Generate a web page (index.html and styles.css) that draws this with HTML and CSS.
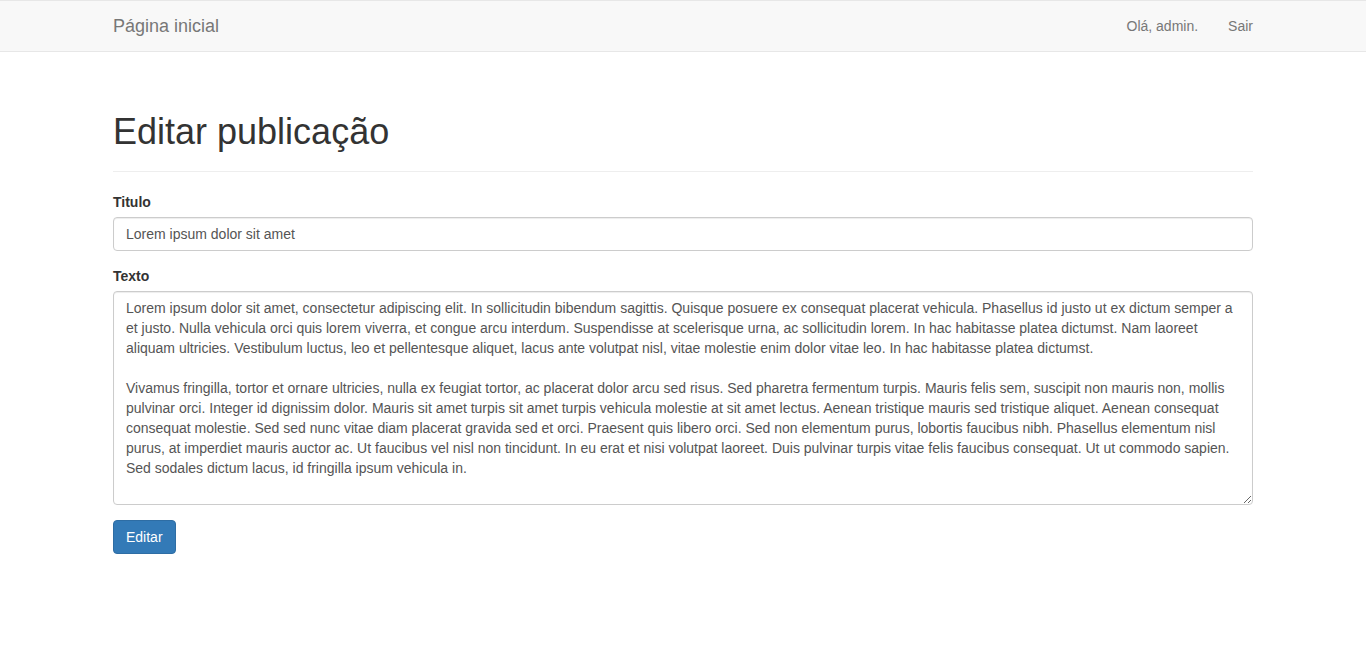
FILE: index.html
```html
<!DOCTYPE html>
<html lang="pt">
<head>
<meta charset="utf-8">
<title>Editar publicação</title>
<link rel="stylesheet" href="styles.css">
</head>
<body>
<nav class="navbar">
  <div class="container navbar-inner">
    <a class="navbar-brand" href="#">Página inicial</a>
    <ul class="navbar-right">
      <li><a href="#">Olá, admin.</a></li>
      <li><a href="#">Sair</a></li>
    </ul>
  </div>
</nav>
<main class="container main">
  <div class="page-header">
    <h1>Editar publicação</h1>
  </div>
  <form>
    <div class="form-group">
      <label for="titulo">Titulo</label>
      <input id="titulo" class="form-control" type="text" value="Lorem ipsum dolor sit amet">
    </div>
    <div class="form-group">
      <label for="texto">Texto</label>
      <textarea id="texto" class="form-control" rows="10">Lorem ipsum dolor sit amet, consectetur adipiscing elit. In sollicitudin bibendum sagittis. Quisque posuere ex consequat placerat vehicula. Phasellus id justo ut ex dictum semper a et justo. Nulla vehicula orci quis lorem viverra, et congue arcu interdum. Suspendisse at scelerisque urna, ac sollicitudin lorem. In hac habitasse platea dictumst. Nam laoreet aliquam ultricies. Vestibulum luctus, leo et pellentesque aliquet, lacus ante volutpat nisl, vitae molestie enim dolor vitae leo. In hac habitasse platea dictumst.

Vivamus fringilla, tortor et ornare ultricies, nulla ex feugiat tortor, ac placerat dolor arcu sed risus. Sed pharetra fermentum turpis. Mauris felis sem, suscipit non mauris non, mollis pulvinar orci. Integer id dignissim dolor. Mauris sit amet turpis sit amet turpis vehicula molestie at sit amet lectus. Aenean tristique mauris sed tristique aliquet. Aenean consequat consequat molestie. Sed sed nunc vitae diam placerat gravida sed et orci. Praesent quis libero orci. Sed non elementum purus, lobortis faucibus nibh. Phasellus elementum nisl purus, at imperdiet mauris auctor ac. Ut faucibus vel nisl non tincidunt. In eu erat et nisi volutpat laoreet. Duis pulvinar turpis vitae felis faucibus consequat. Ut ut commodo sapien. Sed sodales dictum lacus, id fringilla ipsum vehicula in.</textarea>
    </div>
    <button type="submit" class="btn-primary">Editar</button>
  </form>
</main>
</body>
</html>
```

FILE: styles.css
```css
* { box-sizing: border-box; }
html, body {
  margin: 0;
  padding: 0;
}
body {
  font-family: "Liberation Sans", Arial, sans-serif;
  font-size: 14px;
  line-height: 1.42857143;
  color: #333;
  background: #fff;
}
.container {
  width: 1170px;
  margin: 0 auto;
  padding: 0 15px;
}
.main {
  display: flow-root;
}
.navbar {
  background: #f8f8f8;
  border: 1px solid #e7e7e7;
  border-left: 0;
  border-right: 0;
  min-height: 50px;
  margin-bottom: 20px;
}
.navbar-inner {
  display: flex;
  justify-content: space-between;
  align-items: stretch;
  height: 50px;
}
.navbar-brand {
  font-size: 18px;
  line-height: 20px;
  padding: 15px 0;
  color: #777;
  text-decoration: none;
}
.navbar-right {
  list-style: none;
  margin: 0 -15px 0 0;
  padding: 0;
  display: flex;
}
.navbar-right a {
  display: block;
  padding: 15px;
  line-height: 20px;
  color: #777;
  text-decoration: none;
}
.page-header {
  margin: 40px 0 20px;
  padding-bottom: 9px;
  border-bottom: 1px solid #eee;
}
.page-header h1 {
  margin: 0 0 10px;
  font-size: 36px;
  font-weight: 500;
  line-height: 1.1;
}
.form-group {
  margin-bottom: 15px;
}
label {
  display: inline-block;
  margin-bottom: 5px;
  font-weight: 700;
}
.form-control {
  display: block;
  width: 100%;
  padding: 6px 12px;
  font-family: inherit;
  font-size: 14px;
  line-height: 1.42857143;
  color: #555;
  background: #fff;
  border: 1px solid #ccc;
  border-radius: 4px;
  box-shadow: inset 0 1px 1px rgba(0,0,0,.075);
  margin: 0;
}
input.form-control {
  height: 34px;
}
textarea.form-control {
  height: 214px;
  resize: vertical;
}
.btn-primary {
  display: inline-block;
  padding: 6px 12px;
  font-family: inherit;
  font-size: 14px;
  line-height: 1.42857143;
  color: #fff;
  background: #337ab7;
  border: 1px solid #2e6da4;
  border-radius: 4px;
  cursor: pointer;
}
```
